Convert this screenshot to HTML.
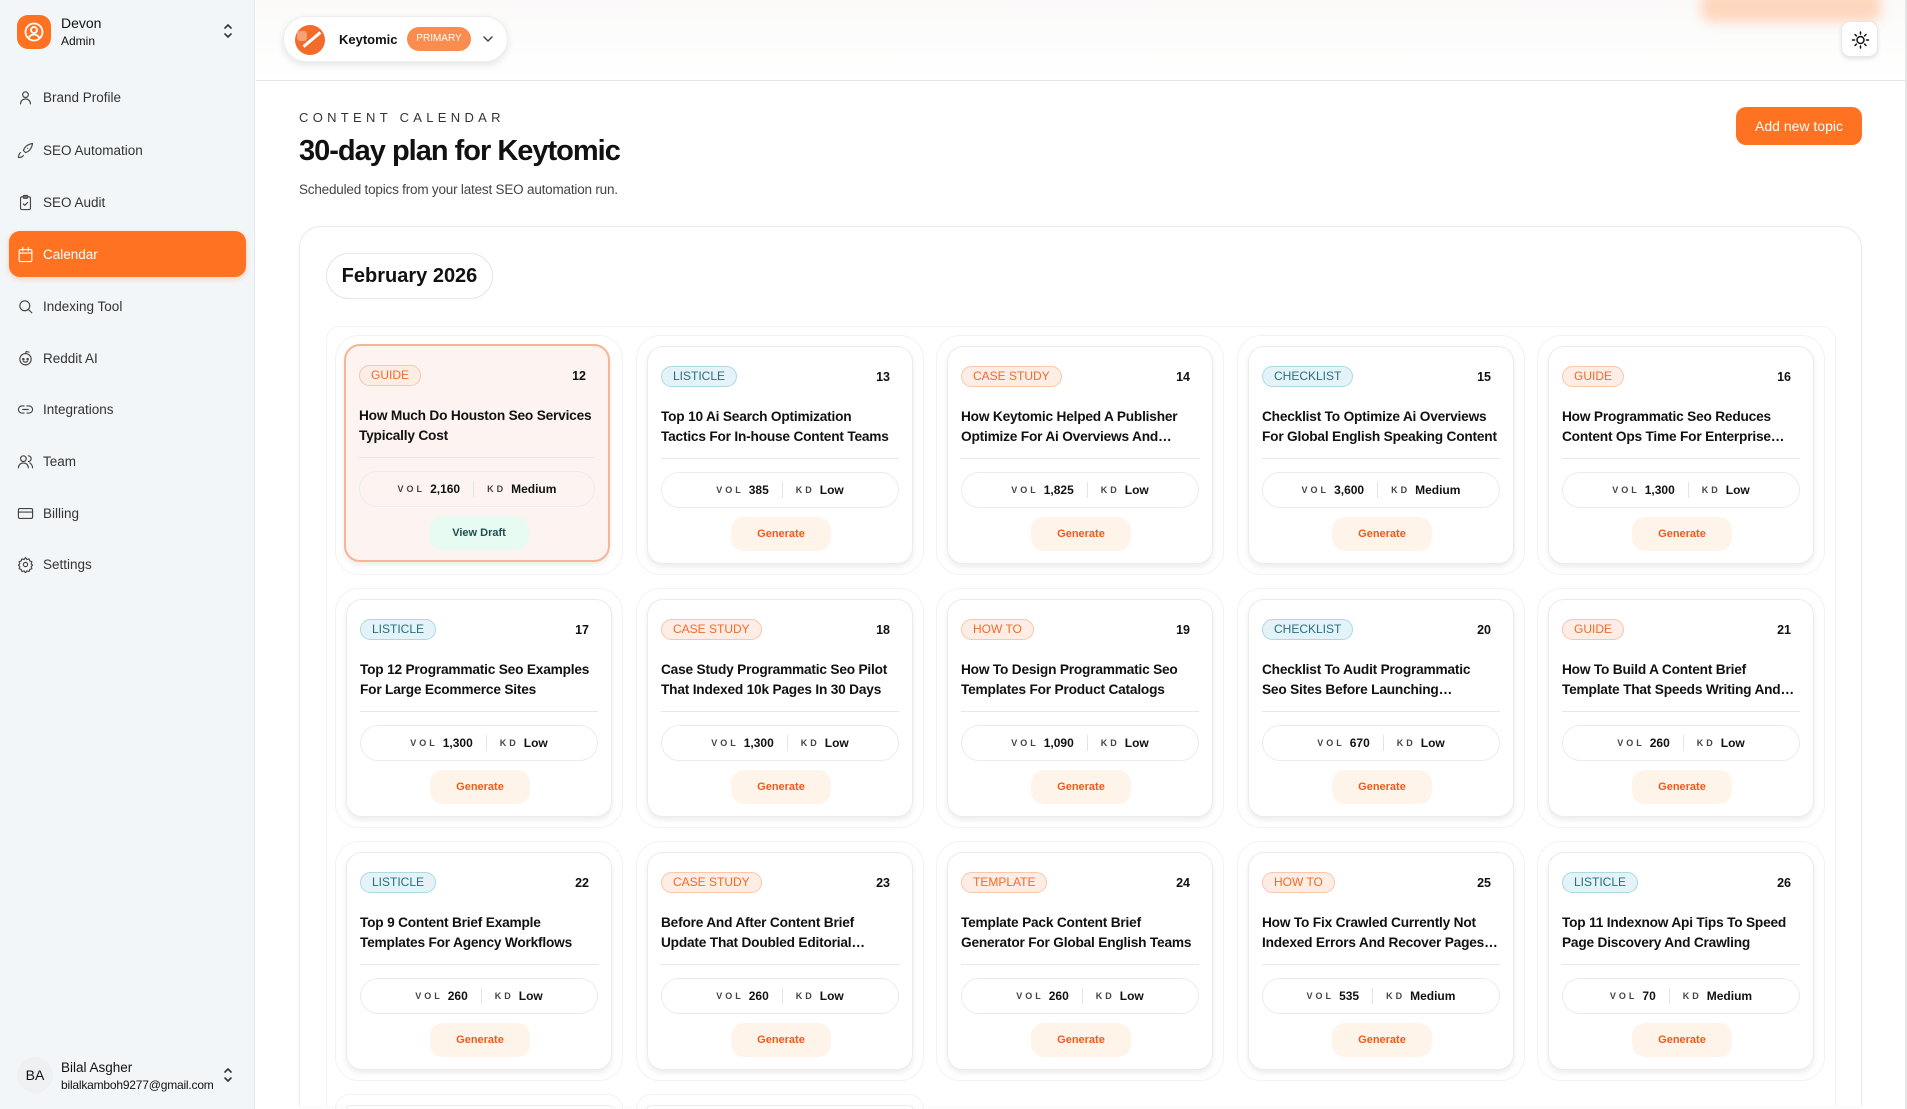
<!DOCTYPE html>
<html><head><meta charset="utf-8">
<style>
*{box-sizing:border-box;margin:0;padding:0}
html,body{width:1907px;height:1109px;overflow:hidden}
body{background:#fff;font-family:"Liberation Sans",Arial,sans-serif;color:#111;position:relative}
#root{position:absolute;left:0;top:0;width:1907px;height:1109px;overflow:hidden}
.side{position:absolute;left:0;top:0;width:255px;height:1109px;background:#f3f6f8;border-right:1px solid #e5e8eb}
.av{position:absolute;left:17px;top:15px;width:34px;height:34px;border-radius:11px;background:#ff7222}
.nav{position:absolute;left:9px;width:237px;height:46px;display:flex;align-items:center;padding-left:8px;font-size:13.5px;color:#333;gap:9px}
.nav svg{width:17px;height:17px;fill:none;stroke:#444;stroke-width:1.6;stroke-linecap:round;stroke-linejoin:round}
.nav.on{background:#ff7222;color:#fff;border-radius:11px;box-shadow:0 2px 6px rgba(255,114,34,.3)}
.nav.on svg{stroke:#fff}
.top{position:absolute;left:256px;top:0;right:0;height:81px;border-bottom:1px solid #e6e6e6;background:linear-gradient(#fbfaf9,#fff)}
.card{position:absolute;width:266px;height:218px;background:#fff;border:1px solid #ececec;border-radius:16px;box-shadow:0 3px 6px rgba(0,0,0,.08)}
.wrap{position:absolute;width:288px;height:240px;border:1px solid #f2f2f2;border-radius:24px}
.tag{position:absolute;left:13px;top:19px;height:21px;padding:0 11px;border-radius:11px;font-size:12px;line-height:19px;border:1px solid}
.o{background:#fdede4;border-color:#f8c7ad;color:#f26b2b}
.b{background:#e3f3f7;border-color:#aadae4;color:#2a6f80}
.day{position:absolute;right:22px;top:23px;font-size:12.5px;font-weight:bold}
.ttl{position:absolute;left:13px;top:60px;width:236px;font-size:13.7px;font-weight:bold;line-height:20px;letter-spacing:-.2px;display:-webkit-box;-webkit-line-clamp:2;-webkit-box-orient:vertical;overflow:hidden;height:40px}
.dv{position:absolute;left:13px;right:13px;top:111px;border-top:1px solid #e8e8e8}
.st{position:absolute;left:13px;right:13px;top:125px;height:36px;border:1px solid #ececec;border-radius:18px;display:flex;align-items:center;justify-content:center;font-size:12px;font-weight:bold}
.st i{font-style:normal;font-size:9px;letter-spacing:3px;color:#444;margin-right:5px;font-weight:bold}
.st .sep{width:1px;height:16px;background:#e4e4e4;margin:0 13px}
.btn{position:absolute;left:83px;top:170px;width:100px;height:34px;border-radius:13px;background:#fff4ea;color:#f05a1a;font-size:11px;font-weight:bold;text-align:center;line-height:34px}
.act{background:#fdf4f1;border:2px solid #f7b594}
.act .btn{background:#e8fbf2;color:#1f4e50}
</style></head><body><div id="root">
<div class="side">
 <div class="av"><svg width="34" height="34" viewBox="0 0 34 34" fill="none" stroke="#fff" stroke-width="1.8"><circle cx="17" cy="17" r="8.5"/><circle cx="17" cy="15" r="3"/><path d="M11.5 23c1.5-2.5 3.5-3.5 5.5-3.5s4 1 5.5 3.5"/></svg></div>
 <div style="position:absolute;left:61px;top:15px;font-size:14px;line-height:17px">Devon<br><span style="font-size:12px">Admin</span></div>
 <svg style="position:absolute;left:222px;top:22px" width="12" height="18" viewBox="0 0 12 18" fill="none" stroke="#333" stroke-width="1.6" stroke-linecap="round"><path d="M3 6l3-3 3 3M3 12l3 3 3-3"/></svg>
 <div class="nav" style="top:74px"><svg viewBox="0 0 24 24"><circle cx="12" cy="8" r="4"/><path d="M5 21c0-4 3-7 7-7s7 3 7 7"/></svg>Brand Profile</div>
 <div class="nav" style="top:127px"><svg viewBox="0 0 24 24"><path d="M5 15c-2 1-3 5-3 7 2 0 6-1 7-3M9 12c2-6 7-9 13-10-1 6-4 11-10 13zM9 12l3 3M15 9h.01"/></svg>SEO Automation</div>
 <div class="nav" style="top:179px"><svg viewBox="0 0 24 24"><rect x="5" y="4" width="14" height="18" rx="2"/><rect x="9" y="2" width="6" height="4" rx="1"/><path d="M9 14l2 2 4-4"/></svg>SEO Audit</div>
 <div class="nav on" style="top:231px"><svg viewBox="0 0 24 24"><rect x="3" y="5" width="18" height="17" rx="2"/><path d="M3 10h18M8 2v5M16 2v5"/></svg>Calendar</div>
 <div class="nav" style="top:283px"><svg viewBox="0 0 24 24"><circle cx="11" cy="11" r="7"/><path d="M21 21l-5-5"/></svg>Indexing Tool</div>
 <div class="nav" style="top:335px"><svg viewBox="0 0 24 24"><circle cx="12" cy="13" r="8"/><circle cx="9" cy="13" r="1"/><circle cx="15" cy="13" r="1"/><path d="M9 16c2 1.5 4 1.5 6 0M12 5l1-3 4 1"/></svg>Reddit AI</div>
 <div class="nav" style="top:386px"><svg viewBox="0 0 24 24"><path d="M10 7H7a5 5 0 000 10h3M14 7h3a5 5 0 010 10h-3M8 12h8"/></svg>Integrations</div>
 <div class="nav" style="top:438px"><svg viewBox="0 0 24 24"><circle cx="9" cy="8" r="4"/><path d="M2 21c0-4 3-7 7-7s7 3 7 7M16 4a4 4 0 010 8M22 21c0-3-2-6-4-7"/></svg>Team</div>
 <div class="nav" style="top:490px"><svg viewBox="0 0 24 24"><rect x="2" y="5" width="20" height="14" rx="2"/><path d="M2 10h20"/></svg>Billing</div>
 <div class="nav" style="top:541px"><svg viewBox="0 0 24 24"><circle cx="12" cy="12" r="3"/><path d="M12 2l2 3 3-1 1 3 3 1-1 3 2 2-2 2 1 3-3 1-1 3-3-1-2 3-2-3-3 1-1-3-3-1 1-3-2-2 2-2-1-3 3-1 1-3 3 1z"/></svg>Settings</div>
 <div style="position:absolute;left:17px;top:1057px;width:36px;height:36px;border-radius:18px;background:#eef0f2;font-size:14px;line-height:36px;text-align:center">BA</div>
 <div style="position:absolute;left:61px;top:1059px;font-size:13.5px;line-height:17px">Bilal Asgher<br><span style="font-size:12px;letter-spacing:-.2px">bilalkamboh9277@gmail.com</span></div>
 <svg style="position:absolute;left:222px;top:1066px" width="12" height="18" viewBox="0 0 12 18" fill="none" stroke="#333" stroke-width="1.6" stroke-linecap="round"><path d="M3 6l3-3 3 3M3 12l3 3 3-3"/></svg>
</div>
<div class="top">
 <div style="position:absolute;left:1445px;top:-10px;width:180px;height:32px;background:#ffd5bd;border-radius:12px;filter:blur(6px)"></div>
 <div style="position:absolute;left:27px;top:16px;width:225px;height:46px;border-radius:23px;background:#fff;border:1px solid #eee;box-shadow:0 3px 8px rgba(0,0,0,.1)">
  <div style="position:absolute;left:11px;top:8px;width:30px;height:30px;border-radius:15px;background:#f26b2b;overflow:hidden"><div style="position:absolute;left:6px;top:13px;width:22px;height:3px;background:#fff;transform:rotate(-40deg)"></div><div style="position:absolute;left:2px;top:6px;width:10px;height:10px;background:#f9a074;border-radius:3px"></div></div>
  <div style="position:absolute;left:55px;top:15px;font-size:13px;font-weight:bold">Keytomic</div>
  <div style="position:absolute;left:123px;top:10px;width:64px;height:24px;border-radius:12px;background:#fb8c4f;color:#fff;font-size:10px;line-height:24px;text-align:center">PRIMARY</div>
  <svg style="position:absolute;left:198px;top:17px" width="12" height="10" viewBox="0 0 12 10" fill="none" stroke="#444" stroke-width="1.5" stroke-linecap="round"><path d="M2 3l4 4 4-4"/></svg>
 </div>
 <div style="position:absolute;left:1585px;top:21px;width:37px;height:36px;border-radius:9px;background:#fff;border:1px solid #e8e8e8;box-shadow:0 2px 4px rgba(0,0,0,.1)"><svg width="37" height="36" viewBox="0 0 37 36" fill="none" stroke="#111" stroke-width="1.5" stroke-linecap="round"><circle cx="18.5" cy="18" r="3.5"/><path d="M18.5 10v2M18.5 24v2M10.5 18h2M24.5 18h2M13 12.5l1.4 1.4M22.6 22.1l1.4 1.4M13 23.5l1.4-1.4M22.6 13.9l1.4-1.4"/></svg></div>
</div>
<div style="position:absolute;left:1905px;top:0;width:2px;height:1109px;background:#e6e6e6"></div>
<div style="position:absolute;left:299px;top:110px;font-size:13px;letter-spacing:4.3px;color:#333">CONTENT CALENDAR</div>
<div style="position:absolute;left:299px;top:135px;font-size:29px;font-weight:bold;letter-spacing:-1px">30-day plan for Keytomic</div>
<div style="position:absolute;left:299px;top:182px;font-size:13.5px;color:#444;letter-spacing:-.2px">Scheduled topics from your latest SEO automation run.</div>
<div style="position:absolute;left:1736px;top:107px;width:126px;height:38px;border-radius:10px;background:#ff7222;color:#fff;font-size:14px;line-height:38px;text-align:center">Add new topic</div>
<div style="position:absolute;left:299px;top:226px;width:1563px;height:880px;border:1px solid #ebebeb;border-bottom:none;border-radius:22px 22px 0 0;box-shadow:0 1px 4px rgba(0,0,0,.04)"></div>
<div style="position:absolute;left:326px;top:253px;width:167px;height:46px;border:1px solid #e6e6e6;border-radius:23px;font-size:20px;font-weight:bold;line-height:44px;text-align:center">February 2026</div>
<div style="position:absolute;left:326px;top:326px;width:1510px;height:780px;border:1px solid #f3f3f3;border-bottom:none;border-radius:14px 14px 0 0"></div>

<div class="wrap" style="left:335px;top:335px"></div><div class="wrap" style="left:636px;top:335px"></div><div class="wrap" style="left:936px;top:335px"></div><div class="wrap" style="left:1237px;top:335px"></div><div class="wrap" style="left:1537px;top:335px"></div>
<div class="wrap" style="left:335px;top:588px"></div><div class="wrap" style="left:636px;top:588px"></div><div class="wrap" style="left:936px;top:588px"></div><div class="wrap" style="left:1237px;top:588px"></div><div class="wrap" style="left:1537px;top:588px"></div>
<div class="wrap" style="left:335px;top:841px"></div><div class="wrap" style="left:636px;top:841px"></div><div class="wrap" style="left:936px;top:841px"></div><div class="wrap" style="left:1237px;top:841px"></div><div class="wrap" style="left:1537px;top:841px"></div>
<div class="wrap" style="left:335px;top:1094px;height:15px;border-bottom:none;border-radius:24px 24px 0 0"></div><div class="wrap" style="left:636px;top:1094px;height:15px;border-bottom:none;border-radius:24px 24px 0 0"></div>

<div class="card act" style="left:344px;top:344px"><span class="tag o">GUIDE</span><span class="day">12</span><div class="ttl">How Much Do Houston Seo Services Typically Cost</div><div class="dv"></div><div class="st"><i>VOL</i>2,160<span class="sep"></span><i>KD</i>Medium</div><div class="btn">View Draft</div></div>
<div class="card" style="left:647px;top:346px"><span class="tag b">LISTICLE</span><span class="day">13</span><div class="ttl">Top 10 Ai Search Optimization Tactics For In-house Content Teams</div><div class="dv"></div><div class="st"><i>VOL</i>385<span class="sep"></span><i>KD</i>Low</div><div class="btn">Generate</div></div>
<div class="card" style="left:947px;top:346px"><span class="tag o">CASE STUDY</span><span class="day">14</span><div class="ttl">How Keytomic Helped A Publisher Optimize For Ai Overviews And Search Visibility</div><div class="dv"></div><div class="st"><i>VOL</i>1,825<span class="sep"></span><i>KD</i>Low</div><div class="btn">Generate</div></div>
<div class="card" style="left:1248px;top:346px"><span class="tag b">CHECKLIST</span><span class="day">15</span><div class="ttl">Checklist To Optimize Ai Overviews For Global English Speaking Content</div><div class="dv"></div><div class="st"><i>VOL</i>3,600<span class="sep"></span><i>KD</i>Medium</div><div class="btn">Generate</div></div>
<div class="card" style="left:1548px;top:346px"><span class="tag o">GUIDE</span><span class="day">16</span><div class="ttl">How Programmatic Seo Reduces Content Ops Time For Enterprise Teams</div><div class="dv"></div><div class="st"><i>VOL</i>1,300<span class="sep"></span><i>KD</i>Low</div><div class="btn">Generate</div></div>

<div class="card" style="left:346px;top:599px"><span class="tag b">LISTICLE</span><span class="day">17</span><div class="ttl">Top 12 Programmatic Seo Examples For Large Ecommerce Sites</div><div class="dv"></div><div class="st"><i>VOL</i>1,300<span class="sep"></span><i>KD</i>Low</div><div class="btn">Generate</div></div>
<div class="card" style="left:647px;top:599px"><span class="tag o">CASE STUDY</span><span class="day">18</span><div class="ttl">Case Study Programmatic Seo Pilot That Indexed 10k Pages In 30 Days</div><div class="dv"></div><div class="st"><i>VOL</i>1,300<span class="sep"></span><i>KD</i>Low</div><div class="btn">Generate</div></div>
<div class="card" style="left:947px;top:599px"><span class="tag o">HOW TO</span><span class="day">19</span><div class="ttl">How To Design Programmatic Seo Templates For Product Catalogs</div><div class="dv"></div><div class="st"><i>VOL</i>1,090<span class="sep"></span><i>KD</i>Low</div><div class="btn">Generate</div></div>
<div class="card" style="left:1248px;top:599px"><span class="tag b">CHECKLIST</span><span class="day">20</span><div class="ttl">Checklist To Audit Programmatic Seo Sites Before Launching Templates</div><div class="dv"></div><div class="st"><i>VOL</i>670<span class="sep"></span><i>KD</i>Low</div><div class="btn">Generate</div></div>
<div class="card" style="left:1548px;top:599px"><span class="tag o">GUIDE</span><span class="day">21</span><div class="ttl">How To Build A Content Brief Template That Speeds Writing And Review Cycles</div><div class="dv"></div><div class="st"><i>VOL</i>260<span class="sep"></span><i>KD</i>Low</div><div class="btn">Generate</div></div>

<div class="card" style="left:346px;top:852px"><span class="tag b">LISTICLE</span><span class="day">22</span><div class="ttl">Top 9 Content Brief Example Templates For Agency Workflows</div><div class="dv"></div><div class="st"><i>VOL</i>260<span class="sep"></span><i>KD</i>Low</div><div class="btn">Generate</div></div>
<div class="card" style="left:647px;top:852px"><span class="tag o">CASE STUDY</span><span class="day">23</span><div class="ttl">Before And After Content Brief Update That Doubled Editorial Throughput</div><div class="dv"></div><div class="st"><i>VOL</i>260<span class="sep"></span><i>KD</i>Low</div><div class="btn">Generate</div></div>
<div class="card" style="left:947px;top:852px"><span class="tag o">TEMPLATE</span><span class="day">24</span><div class="ttl">Template Pack Content Brief Generator For Global English Teams</div><div class="dv"></div><div class="st"><i>VOL</i>260<span class="sep"></span><i>KD</i>Low</div><div class="btn">Generate</div></div>
<div class="card" style="left:1248px;top:852px"><span class="tag o">HOW TO</span><span class="day">25</span><div class="ttl">How To Fix Crawled Currently Not Indexed Errors And Recover Pages Fast</div><div class="dv"></div><div class="st"><i>VOL</i>535<span class="sep"></span><i>KD</i>Medium</div><div class="btn">Generate</div></div>
<div class="card" style="left:1548px;top:852px"><span class="tag b">LISTICLE</span><span class="day">26</span><div class="ttl">Top 11 Indexnow Api Tips To Speed Page Discovery And Crawling</div><div class="dv"></div><div class="st"><i>VOL</i>70<span class="sep"></span><i>KD</i>Medium</div><div class="btn">Generate</div></div>

<div class="card" style="left:346px;top:1105px;height:4px;border-bottom:none;border-radius:16px 16px 0 0;box-shadow:none"></div>
<div class="card" style="left:647px;top:1105px;height:4px;border-bottom:none;border-radius:16px 16px 0 0;box-shadow:none"></div>
</div></body></html>
